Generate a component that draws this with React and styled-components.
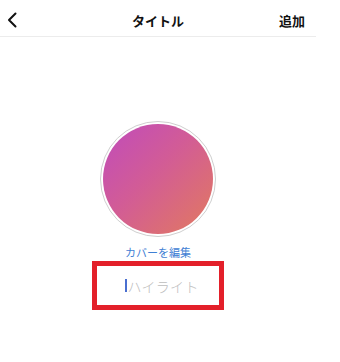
import React from "react";
import styled, { createGlobalStyle } from "styled-components";

const Global = createGlobalStyle`
  body {
    margin: 0;
    background: #fff;
    font-family: "Noto Sans CJK JP", "Noto Sans", sans-serif;
  }
`;

const Screen = styled.div`
  width: 316px;
  height: 362px;
  display: flex;
  flex-direction: column;
  align-items: center;
`;

const Header = styled.header`
  width: 100%;
  height: 37px;
  box-sizing: border-box;
  padding-top: 3px;
  border-bottom: 1px solid #ececec;
  display: grid;
  grid-template-columns: 60px 1fr 60px;
  align-items: center;
`;

const Back = styled.button`
  border: 0;
  background: none;
  padding: 0 0 0 7px;
  display: flex;
  align-items: center;
  height: 100%;
`;

const Title = styled.h1`
  margin: 0;
  font-size: 13px;
  font-weight: 700;
  color: #111;
  text-align: center;
  padding-top: 2px;
`;

const Add = styled.button`
  border: 0;
  background: none;
  font-family: inherit;
  font-size: 13px;
  font-weight: 700;
  color: #111;
  padding: 2px 11px 0 0;
  text-align: right;
`;

const Cover = styled.div`
  margin-top: 84px;
  width: 116px;
  height: 116px;
  box-sizing: border-box;
  border-radius: 50%;
  border: 1px solid #cfcfcf;
  padding: 2px;
`;

const CoverImage = styled.div`
  width: 100%;
  height: 100%;
  border-radius: 50%;
  background: linear-gradient(135deg, #c04bbc 0%, #d25c96 45%, #e27a5e 100%);
`;

const EditLink = styled.a`
  margin-top: 8px;
  font-size: 11px;
  line-height: 14px;
  color: #3f80d4;
  text-decoration: none;
`;

const Marked = styled.div`
  margin-top: 2px;
  width: 132px;
  height: 49px;
  box-sizing: border-box;
  border: 5px solid #e3202a;
  display: flex;
  align-items: center;
  padding-left: 28px;
`;

const Cursor = styled.span`
  width: 1.5px;
  height: 13px;
  background: #4a6fd0;
  margin-right: 1px;
`;

const Placeholder = styled.span`
  font-size: 14px;
  font-weight: 300;
  color: #bdbdbd;
  letter-spacing: 0.3px;
`;

export default function App() {
  return (
    <>
      <Global />
      <Screen>
        <Header>
          <Back aria-label="戻る">
            <svg width="10" height="16" viewBox="0 0 10 16">
              <path d="M8.5 1.5 L2 8 L8.5 14.5" fill="none" stroke="#111" strokeWidth="2" strokeLinecap="round" strokeLinejoin="round" />
            </svg>
          </Back>
          <Title>タイトル</Title>
          <Add>追加</Add>
        </Header>
        <Cover>
          <CoverImage />
        </Cover>
        <EditLink>カバーを編集</EditLink>
        <Marked>
          <Cursor />
          <Placeholder>ハイライト</Placeholder>
        </Marked>
      </Screen>
    </>
  );
}
